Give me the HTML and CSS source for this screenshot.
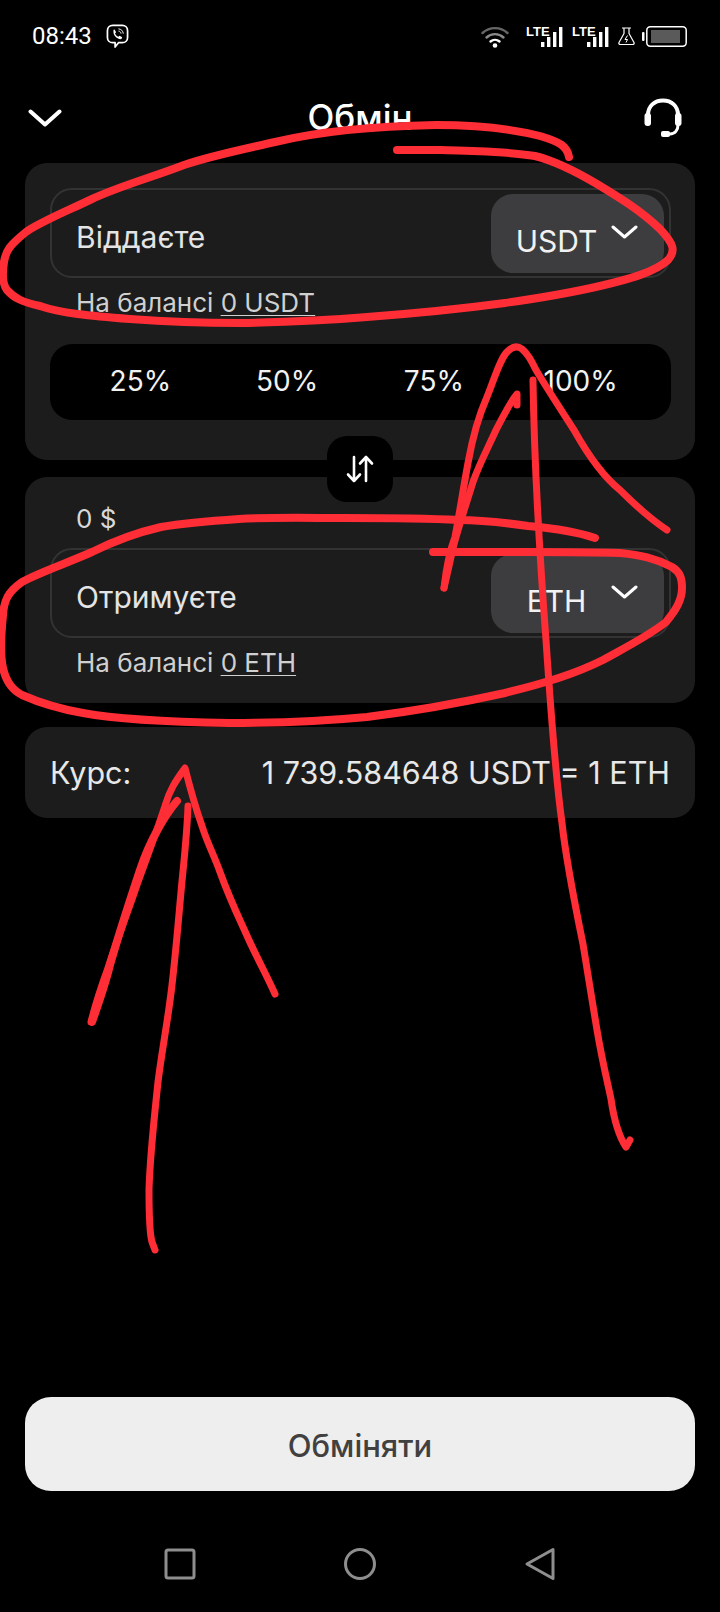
FILE: index.html
```html
<!DOCTYPE html>
<html lang="uk">
<head>
<meta charset="utf-8">
<title>Обмін</title>
<link rel="stylesheet" href="styles.css">
</head>
<body>
<div class="screen">
  <div class="status">
    <div class="status-left">
      <span class="clock">08:43</span>
      <svg class="viber" viewBox="0 0 24 26" fill="none" stroke="#fff" stroke-width="1.8" stroke-linejoin="round"><path d="M7 1.500h10c3.200 0 5.500 2.300 5.500 5.500v7c0 3.200-2.300 5.500-5.500 5.500h-4l-3.500 4.500v-4.500H7c-3.200 0-5.500-2.300-5.500-5.500V7C1.500 3.800 3.800 1.500 7 1.500z"/><path d="M7 6.500l2-.8 1.500 2.800-1.100 1.300c.7 1.500 1.900 2.700 3.500 3.500l1.300-1.100 2.700 1.600-.8 1.900c-4.500.6-9.500-4.500-8.100-9.200z" fill="#fff" stroke="none"/><path d="M13 5c2.800.2 4.800 2.200 5 5M13 7.300c1.500.1 2.600 1.200 2.700 2.700" stroke-width="1"/></svg>
    </div>
    <div class="status-right">
      <svg class="wifi" viewBox="0 0 28 23" fill="none" stroke-linecap="round"><path d="M1.500 8C8.500 1.500 19.500 1.500 26.500 8" stroke="#666" stroke-width="2.400"/><path d="M5.500 12.500c4.800-4.500 12.200-4.500 17 0" stroke="#8a8a8a" stroke-width="2.400"/><path d="M9.500 16.500c2.600-2.200 6.400-2.200 9 0" stroke="#fff" stroke-width="2.400"/><circle cx="14" cy="20.500" r="2.300" fill="#fff"/></svg>
      <svg class="lte" viewBox="0 0 37 22"><text class="lte-text" x="0" y="11">LTE</text><rect x="15" y="17" width="3.400" height="5" fill="#fff"/><rect x="21" y="12" width="3.400" height="10" fill="#fff"/><rect x="27" y="7" width="3.400" height="15" fill="#fff"/><rect x="33" y="2" width="3.400" height="20" fill="#fff"/></svg>
      <svg class="lte" viewBox="0 0 37 22"><text class="lte-text" x="0" y="11">LTE</text><rect x="15" y="17" width="3.400" height="5" fill="#fff"/><rect x="21" y="12" width="3.400" height="10" fill="#fff"/><rect x="27" y="7" width="3.400" height="15" fill="#fff"/><rect x="33" y="2" width="3.400" height="20" fill="#fff"/></svg>
      <svg class="flask" viewBox="0 0 17 18" fill="none" stroke="#fff" stroke-width="1.200" stroke-linejoin="round"><path d="M4 1h9M6 1v5.500L1 15.500c-.5 1 .2 2 1.200 2h12.600c1 0 1.700-1 1.200-2L11 6.500V1"/><path d="M9.500 8.500L7 12.500h2.500L8 15.500" stroke-width="1"/></svg>
      <svg class="battery" viewBox="0 0 45 21"><rect x="0" y="6" width="2.500" height="9" rx="1" fill="#fff"/><rect x="4.800" y=".8" width="39.400" height="19.400" rx="3.500" fill="none" stroke="#fff" stroke-width="1.500"/><rect x="9" y="4" width="29" height="13" fill="#5a5a5a"/></svg>
    </div>
  </div>

  <header class="topbar">
    <svg class="topbar-chevron" viewBox="0 0 34 18" fill="none" stroke="#fff" stroke-width="4" stroke-linecap="round" stroke-linejoin="round"><path d="M2.500 2.500L17 15.500 31.500 2.500"/></svg>
    <h1 class="title">Обмін</h1>
    <svg class="headset" viewBox="0 0 40 40" fill="none" stroke="#fff" stroke-width="4"><path d="M5 20v-3C5 8 11.500 2.500 20 2.500S35 8 35 17v3"/><rect x="1.500" y="15" width="6.500" height="13" rx="3" fill="#fff" stroke="none"/><rect x="32" y="15" width="6.500" height="13" rx="3" fill="#fff" stroke="none"/><path d="M35 27c0 5-3 9-8 9h-6" stroke-width="3"/><rect x="18" y="33" width="9" height="6" rx="2" fill="#fff" stroke="none"/></svg>
  </header>

  <main class="content">
    <div class="exchange">
      <section class="card card-give">
        <div class="field">
          <span class="field-label">Віддаєте</span>
          <div class="select">
            <span class="select-value">USDT</span>
            <svg class="select-chevron" viewBox="0 0 27 14" fill="none" stroke="#fff" stroke-width="3" stroke-linecap="round" stroke-linejoin="round"><path d="M2 2l11.500 10L25 2"/></svg>
          </div>
        </div>
        <p class="balance">На балансі <u class="balance-value">0 USDT</u></p>
        <div class="percents">
          <span>25%</span><span>50%</span><span>75%</span><span>100%</span>
        </div>
      </section>

      <button class="swap" type="button" aria-label="swap">
        <svg viewBox="0 0 28 30" fill="none" stroke="#fff" stroke-width="2.600" stroke-linecap="round" stroke-linejoin="round"><path d="M8 3v24M2 20.500L8 27l6-6.500"/><path d="M20 27V3M14 9.500L20 3l6 6.500"/></svg>
      </button>

      <section class="card card-get">
        <p class="usd">0 $</p>
        <div class="field">
          <span class="field-label">Отримуєте</span>
          <div class="select">
            <span class="select-value">ETH</span>
            <svg class="select-chevron" viewBox="0 0 27 14" fill="none" stroke="#fff" stroke-width="3" stroke-linecap="round" stroke-linejoin="round"><path d="M2 2l11.500 10L25 2"/></svg>
          </div>
        </div>
        <p class="balance">На балансі <u class="balance-value">0 ETH</u></p>
      </section>
    </div>

    <section class="rate">
      <span class="rate-label">Курс:</span>
      <span class="rate-value">1 739.584648 USDT = 1 ETH</span>
    </section>
  </main>

  <button class="submit" type="button">Обміняти</button>

  <nav class="navbar">
    <svg class="nav-icon" viewBox="0 0 32 34" fill="none" stroke="#8e8e8e" stroke-width="3" stroke-linejoin="round"><rect x="2" y="3" width="28" height="28" rx="2"/></svg>
    <svg class="nav-icon" viewBox="0 0 32 34" fill="none" stroke="#8e8e8e" stroke-width="3"><circle cx="16" cy="17" r="14.500"/></svg>
    <svg class="nav-icon" viewBox="0 0 32 34" fill="none" stroke="#8e8e8e" stroke-width="3" stroke-linejoin="round"><path d="M29 2.500v29L3 17z"/></svg>
  </nav>

  <svg class="scribbles" viewBox="0 0 720 1612" fill="none" stroke="#ff2d35" stroke-linecap="round" stroke-linejoin="round">
    <path stroke-width="8" d="M569 157 C567 146 560 142 540 136 C505 127 470 125 436 125 C380 126 325 130 275 142 C240 150 210 156 184 165 C150 178 120 186 92 199 C65 212 40 222 26 232 C10 245 6 250 4 262 C2 275 3 285 7 290 C14 298 22 302 40 306 C60 313 90 316 130 319 C170 322 200 323 240 323 C290 322 330 320 367 317 C420 313 460 309 505 303 C540 298 570 293 600 286 C630 279 655 272 668 260 C676 251 674 244 660 229 C640 210 620 198 597 184 C575 171 555 161 535 156 C505 151 470 151 441 150 L397 150"/>
    <path stroke-width="8" d="M595 538 C575 531 550 528 528 526 C500 522 480 520 459 520 C420 518 385 518 344 518 C310 518 270 517 239 519 C210 521 185 523 161 527 C135 533 112 542 92 552 C65 564 40 572 22 582 C8 592 4 600 3 615 C1 635 0 655 3 668 C6 682 12 690 22 695 C40 703 60 709 83 713 C120 720 170 722 230 723 C280 723 325 721 367 717 C415 711 460 703 505 693 C545 683 575 674 603 660 C630 645 650 635 666 622 C676 610 682 600 682 588 C682 578 680 572 672 567 C655 558 640 555 620 553 C590 552 560 552 528 552 L433 552"/>
    <path stroke-width="7" d="M444 588 C446 570 450 550 455 537 C460 510 463 490 468 463 C473 435 479 415 487 397 C494 380 500 358 508 351 C513 346 518 346 522 349 C528 354 531 360 536 370 C548 390 560 408 574 430 C588 455 605 478 620 490 C635 505 652 520 667 530"/>
    <path stroke-width="7" d="M517 405 L517 394 C510 402 503 417 496 430 C488 448 480 462 473 482 C466 505 459 525 453 548 C450 562 447 575 444 588"/>
    <path stroke-width="7" d="M533 380 C534 450 540 560 546 640 C550 700 556 780 562 823 C566 860 575 905 583 944 C588 975 592 1000 597 1030 C602 1060 607 1080 611 1099 C614 1120 618 1135 626 1147 L630 1140"/>
    <path stroke-width="7" d="M91 1022 C94 1010 100 990 108 968 C115 945 127 915 138 882 C148 855 157 830 165 806 C170 788 178 778 185 768 C190 788 195 806 202 826 C208 845 214 855 220 872 C230 900 240 920 248 938 C258 960 268 978 275 994"/>
    <path stroke-width="8" d="M92 1022 C98 1005 105 985 110 965 C120 930 130 900 140 870 C150 840 165 815 177 801"/>
    <path stroke-width="7" d="M188 806 C187 835 184 860 181 892 C178 925 176 950 172 985 C168 1020 162 1050 158 1082 C154 1120 150 1155 149 1190 C149 1215 150 1235 152 1242 L155 1250"/>
  </svg>
</div>
</body>
</html>
```
FILE: styles.css
```css
* { box-sizing: border-box; }
html, body { margin: 0; padding: 0; background: #000; }
.screen {
  position: relative;
  width: 720px;
  height: 1612px;
  overflow: hidden;
  display: flex;
  flex-direction: column;
  background: #000;
  color: #e8e8e8;
  font-family: Inter, "Noto Sans", sans-serif;
}
p, h1 { margin: 0; }

.status {
  height: 72px;
  display: flex;
  align-items: center;
  justify-content: space-between;
  padding: 0 33px 0 32px;
}
.status-left { display: flex; align-items: center; gap: 14px; }
.clock { font-family: Roboto, sans-serif; font-size: 24px; color: #fff; }
.viber { width: 23px; height: 25px; }
.status-right { display: flex; align-items: center; }
.wifi { width: 28px; height: 23px; margin-right: 17px; }
.lte { width: 37px; height: 22px; margin-right: 9px; }
.lte-text { font-family: "Liberation Sans", sans-serif; font-size: 13px; font-weight: 700; fill: #fff; }
.flask { width: 17px; height: 18px; margin-right: 7px; }
.battery { width: 45px; height: 21px; }

.topbar {
  height: 91px;
  display: flex;
  align-items: center;
  justify-content: space-between;
  padding: 0 37px 0 28px;
  position: relative;
}
.topbar-chevron { width: 34px; height: 18px; }
.title { font-size: 35px; font-weight: 500; color: #fff; position: absolute; left: 0; right: 0; top: 24px; text-align: center; }
.headset { width: 40px; height: 40px; }

.content { padding: 0 25px; display: flex; flex-direction: column; gap: 24px; }
.exchange { position: relative; display: flex; flex-direction: column; gap: 17px; }
.card { background: #1c1c1c; border-radius: 22px; padding: 25px 24px 0 25px; }
.card-give { height: 297px; }
.card-get { height: 226px; padding-top: 18px; }
.field {
  height: 90px;
  display: flex;
  align-items: center;
  justify-content: space-between;
  border: 2px solid #333;
  border-radius: 22px;
  padding: 4px 5px 4px 24px;
}
.field-label { font-size: 30px; color: #e4e4e4; padding-top: 8px; }
.select {
  width: 173px;
  height: 79px;
  background: #3d3d3f;
  border-radius: 22px;
  position: relative;
  display: flex;
  align-items: center;
  justify-content: center;
  padding: 15px 42px 0 0;
}
.select-value { font-size: 30px; color: #f2f2f2; }
.select-chevron { position: absolute; right: 26px; top: 31px; width: 27px; height: 14px; }
.balance { font-size: 26px; color: #d0d0d0; padding: 11px 0 0 26px; line-height: 27px; }
.balance-value { text-underline-offset: 3px; text-decoration-thickness: 1px; }
.percents {
  margin-top: 28px;
  height: 76px;
  background: #000;
  border-radius: 22px;
  display: grid;
  grid-template-columns: repeat(4, 1fr);
  align-items: center;
  justify-items: center;
  padding: 0 17px 2px;
  font-size: 28px;
  color: #f2f2f2;
}
.swap {
  position: absolute;
  left: 302px;
  top: 273px;
  width: 66px;
  height: 66px;
  border: 0;
  border-radius: 20px;
  background: #000;
  display: flex;
  align-items: center;
  justify-content: center;
  padding: 0;
}
.swap svg { width: 28px; height: 30px; }
.usd { font-size: 26px; color: #d8d8d8; padding-left: 26px; line-height: 30px; height: 53px; margin-top: 9px; }
.card-get .field { margin-top: -9px; }

.rate {
  height: 91px;
  background: #1c1c1c;
  border-radius: 22px;
  display: flex;
  align-items: center;
  justify-content: space-between;
  padding: 0 25px;
  font-size: 30.500px;
  color: #e8e8e8;
}
.submit {
  margin: auto 25px 0;
  height: 94px;
  border: 0;
  border-radius: 26px;
  background: #eeeeee;
  color: #404040;
  font: 500 31px Inter, sans-serif;
  padding: 2px 0 0;
}
.navbar {
  height: 121px;
  display: flex;
  align-items: flex-start;
  justify-content: center;
  gap: 148px;
  padding-top: 56px;
}
.nav-icon { width: 32px; height: 34px; }
.scribbles { position: absolute; left: 0; top: 0; width: 720px; height: 1612px; pointer-events: none; }
```
